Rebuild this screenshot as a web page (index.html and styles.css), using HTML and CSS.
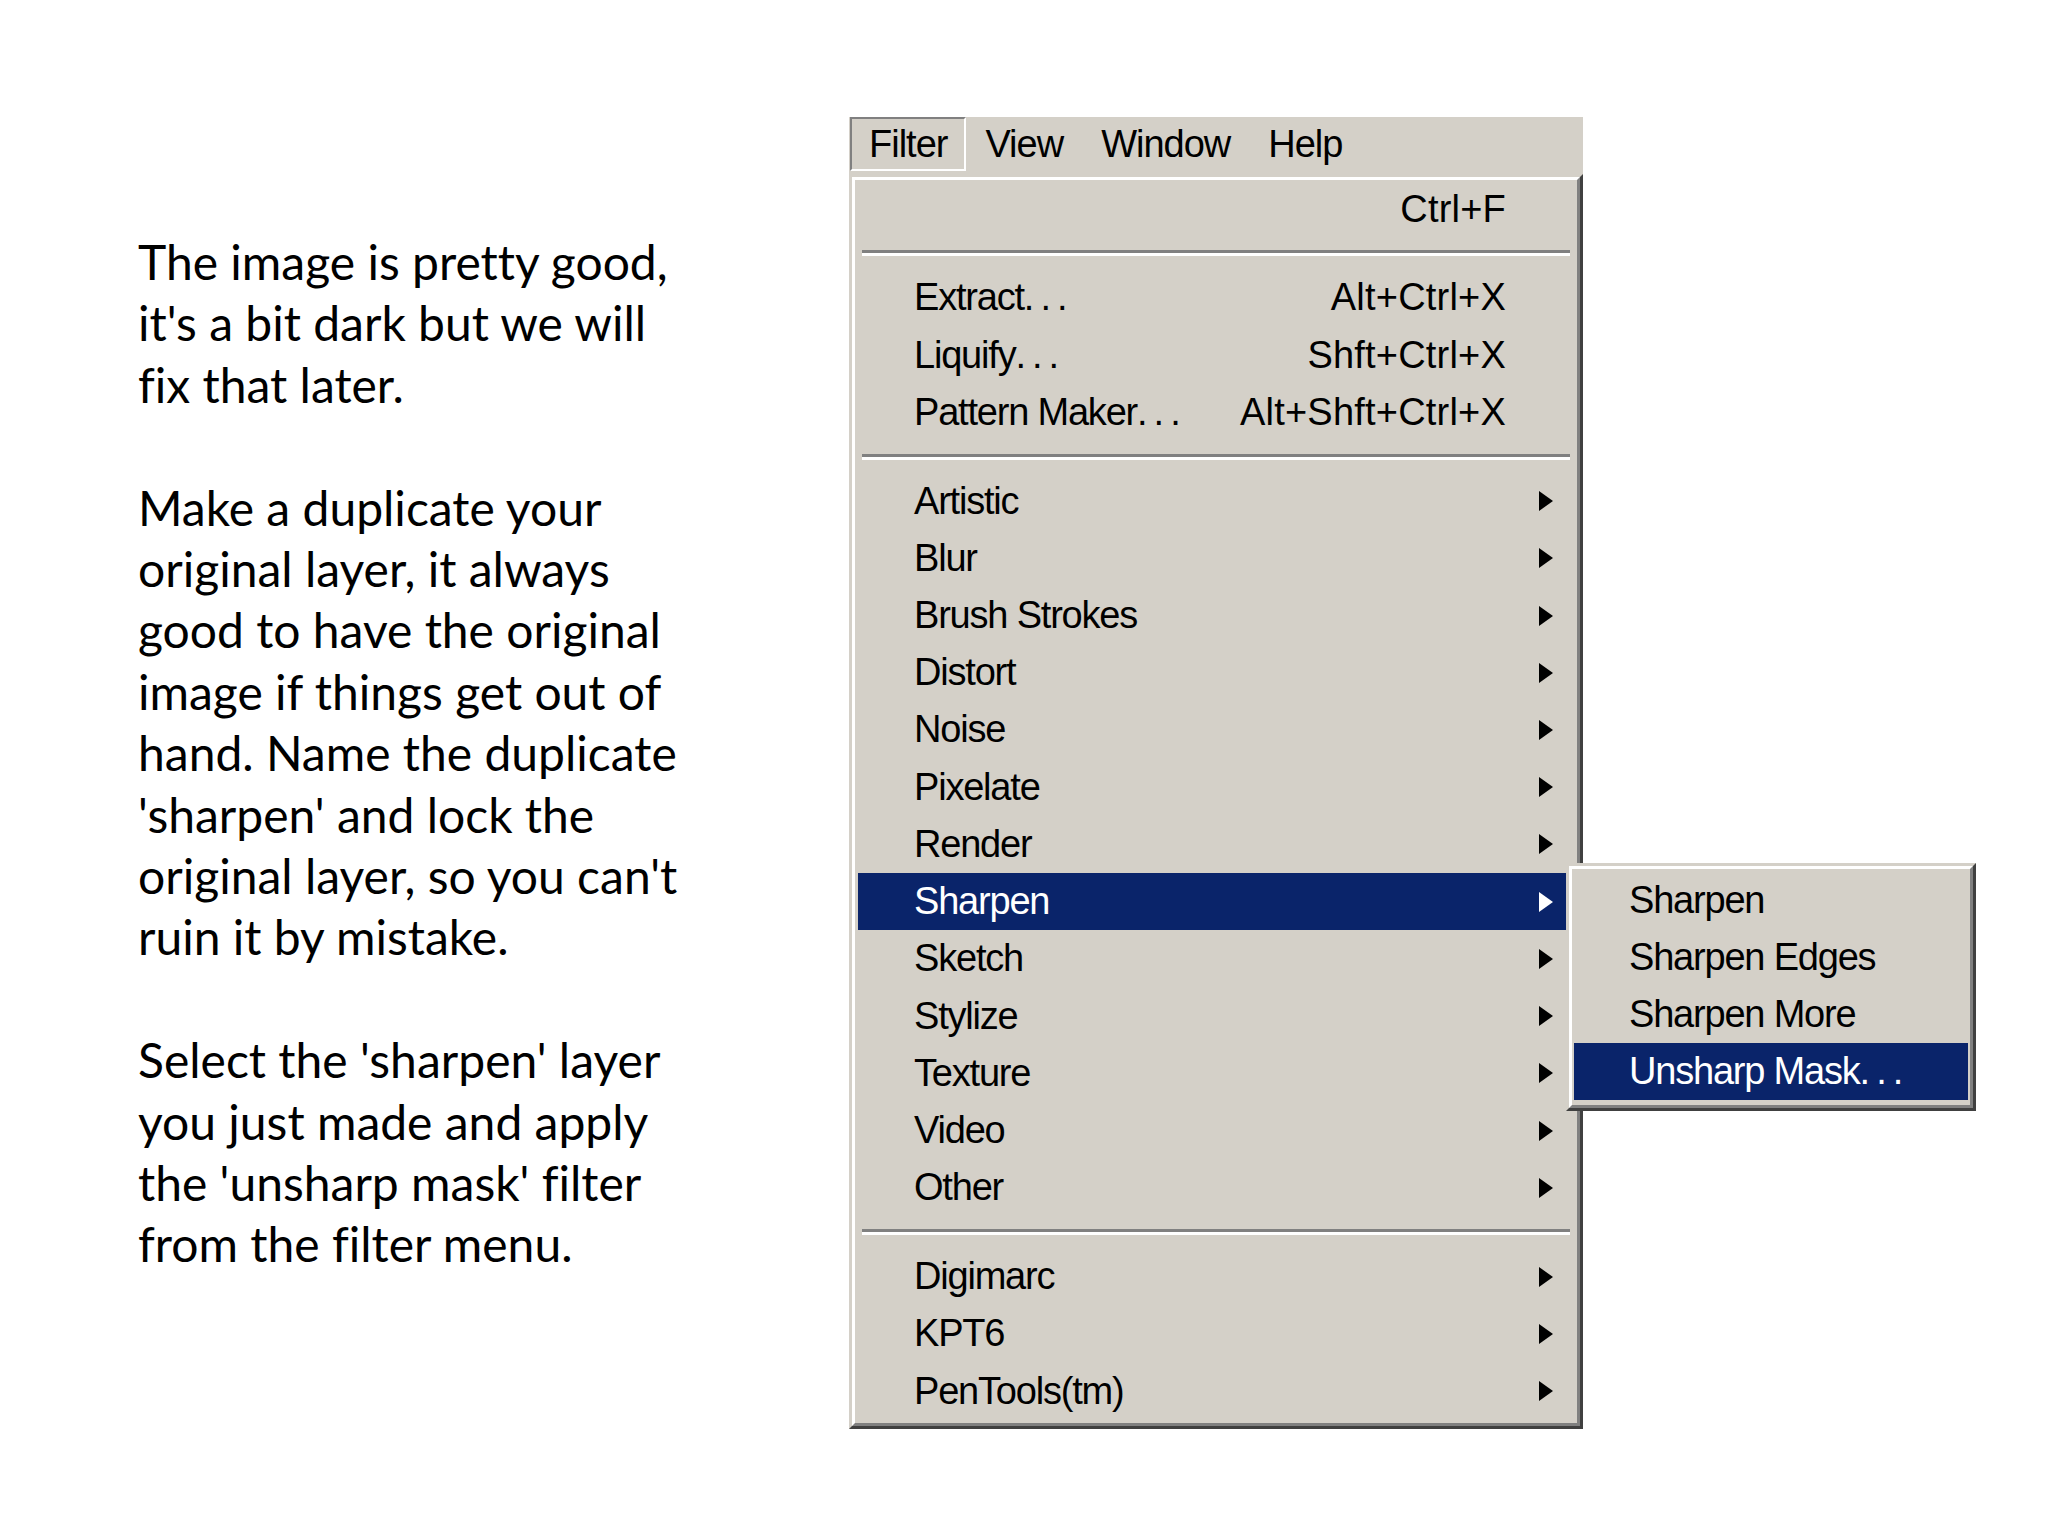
FILE: index.html
```html
<!DOCTYPE html>
<html>
<head>
<meta charset="utf-8">
<title>Filter menu - Sharpen</title>
<link rel="stylesheet" href="styles.css">
</head>
<body>
<div class="slide">
  <div class="notes">
    <p>The image is pretty good,<br>it's a bit dark but we will<br>fix that later.</p>
    <p>Make a duplicate your<br>original layer, it always<br>good to have the original<br>image if things get out of<br>hand. Name the duplicate<br>'sharpen' and lock the<br>original layer, so you can't<br>ruin it by mistake.</p>
    <p>Select the 'sharpen' layer<br>you just made and apply<br>the 'unsharp mask' filter<br>from the filter menu.</p>
  </div>
  <div class="app">
    <div class="menu-wrap">
      <div class="menubar">
        <div class="bar-item active">Filter</div>
        <div class="bar-item">View</div>
        <div class="bar-item">Window</div>
        <div class="bar-item">Help</div>
      </div>
      <div class="dropdown">
        <div class="dropdown-inner">
          <div class="row"><span class="label"></span><span class="key">Ctrl+F</span><span class="sub"></span></div>
          <div class="sep"></div>
          <div class="row"><span class="label">Extract<span class="dots">...</span></span><span class="key">Alt+Ctrl+X</span><span class="sub"></span></div>
          <div class="row"><span class="label">Liquify<span class="dots">...</span></span><span class="key">Shft+Ctrl+X</span><span class="sub"></span></div>
          <div class="row"><span class="label">Pattern Maker<span class="dots">...</span></span><span class="key">Alt+Shft+Ctrl+X</span><span class="sub"></span></div>
          <div class="sep"></div>
          <div class="row"><span class="label">Artistic</span><span class="key"></span><span class="sub"><i class="arrow"></i></span></div>
          <div class="row"><span class="label">Blur</span><span class="key"></span><span class="sub"><i class="arrow"></i></span></div>
          <div class="row"><span class="label">Brush Strokes</span><span class="key"></span><span class="sub"><i class="arrow"></i></span></div>
          <div class="row"><span class="label">Distort</span><span class="key"></span><span class="sub"><i class="arrow"></i></span></div>
          <div class="row"><span class="label">Noise</span><span class="key"></span><span class="sub"><i class="arrow"></i></span></div>
          <div class="row"><span class="label">Pixelate</span><span class="key"></span><span class="sub"><i class="arrow"></i></span></div>
          <div class="row"><span class="label">Render</span><span class="key"></span><span class="sub"><i class="arrow"></i></span></div>
          <div class="row selected"><span class="label">Sharpen</span><span class="key"></span><span class="sub"><i class="arrow"></i></span></div>
          <div class="row"><span class="label">Sketch</span><span class="key"></span><span class="sub"><i class="arrow"></i></span></div>
          <div class="row"><span class="label">Stylize</span><span class="key"></span><span class="sub"><i class="arrow"></i></span></div>
          <div class="row"><span class="label">Texture</span><span class="key"></span><span class="sub"><i class="arrow"></i></span></div>
          <div class="row"><span class="label">Video</span><span class="key"></span><span class="sub"><i class="arrow"></i></span></div>
          <div class="row"><span class="label">Other</span><span class="key"></span><span class="sub"><i class="arrow"></i></span></div>
          <div class="sep"></div>
          <div class="row"><span class="label">Digimarc</span><span class="key"></span><span class="sub"><i class="arrow"></i></span></div>
          <div class="row"><span class="label">KPT6</span><span class="key"></span><span class="sub"><i class="arrow"></i></span></div>
          <div class="row"><span class="label">PenTools(tm)</span><span class="key"></span><span class="sub"><i class="arrow"></i></span></div>
        </div>
      </div>
      <div class="submenu">
        <div class="submenu-inner">
          <div class="srow">Sharpen</div>
          <div class="srow">Sharpen Edges</div>
          <div class="srow">Sharpen More</div>
          <div class="srow selected">Unsharp Mask<span class="dots">...</span></div>
        </div>
      </div>
    </div>
  </div>
</div>
</body>
</html>
```

FILE: styles.css
```css
html, body {
  margin: 0;
  padding: 0;
  background: #ffffff;
}

.slide {
  width: 2048px;
  height: 1536px;
  display: flex;
  padding-left: 138px;
  box-sizing: border-box;
}

.notes {
  width: 711px;
  flex: none;
  padding-top: 231px;
  font-family: "Lato", "Open Sans", sans-serif;
  font-size: 48px;
  line-height: 61.4px;
  color: #000;
  font-variant-ligatures: none;
}

.notes p {
  margin: 0 0 61.4px 0;
  white-space: nowrap;
}

.app {
  padding-top: 117px;
  flex: none;
}

.menu-wrap {
  position: relative;
  width: 734px;
  font-family: "Liberation Sans", Arial, sans-serif;
  font-size: 38px;
  color: #000;
}

.menubar {
  height: 57px;
  background: #d4d0c8;
  display: flex;
  align-items: flex-start;
  padding-left: 1px;
  letter-spacing: -1px;
}

.bar-item {
  height: 54px;
  padding: 0 17px;
  display: flex;
  align-items: center;
  box-sizing: border-box;
  border: 2px solid transparent;
}

.bar-item.active {
  border-color: #808080 #ffffff #ffffff #808080;
}

.dropdown {
  border: 3px solid;
  border-color: #d4d0c8 #404040 #404040 #d4d0c8;
  background: #d4d0c8;
  height: 1255px;
  box-sizing: border-box;
}

.dropdown-inner {
  border: 3px solid;
  border-color: #ffffff #808080 #808080 #ffffff;
  height: 100%;
  box-sizing: border-box;
  padding: 0.5px 3px 0 3px;
}

.row {
  height: 57.24px;
  display: flex;
  align-items: center;
  padding-left: 56px;
  padding-right: 21px;
}

.row .label {
  flex: 1;
  white-space: nowrap;
  letter-spacing: -1.2px;
}

.dots {
  letter-spacing: 6px;
}

.row .key {
  white-space: nowrap;
  letter-spacing: 0.2px;
}

.row .sub {
  width: 47px;
  display: flex;
  justify-content: flex-end;
  align-items: center;
}

.arrow {
  display: block;
  width: 0;
  height: 0;
  border-left: 14px solid #000;
  border-top: 10px solid transparent;
  border-bottom: 10px solid transparent;
}

.row.selected {
  background: #0a246a;
  color: #ffffff;
}

.row.selected .arrow {
  border-left-color: #ffffff;
}

.sep {
  height: 31.5px;
  display: flex;
  align-items: center;
  padding: 0 4px;
}

.sep::before {
  content: "";
  flex: 1;
  height: 0;
  border-top: 3px solid #808080;
  border-bottom: 3px solid #ffffff;
}

.submenu {
  position: absolute;
  left: 717px;
  top: 746px;
  width: 410px;
  height: 248px;
  box-sizing: border-box;
  border: 3px solid;
  border-color: #d4d0c8 #404040 #404040 #d4d0c8;
  background: #d4d0c8;
}

.submenu-inner {
  border: 3px solid;
  border-color: #ffffff #808080 #808080 #ffffff;
  height: 100%;
  box-sizing: border-box;
  padding: 2.5px 2px 0 2px;
}

.srow {
  height: 57.24px;
  display: flex;
  align-items: center;
  padding-left: 55px;
  white-space: nowrap;
  letter-spacing: -1.2px;
}

.srow.selected {
  background: #0a246a;
  color: #ffffff;
}
```
